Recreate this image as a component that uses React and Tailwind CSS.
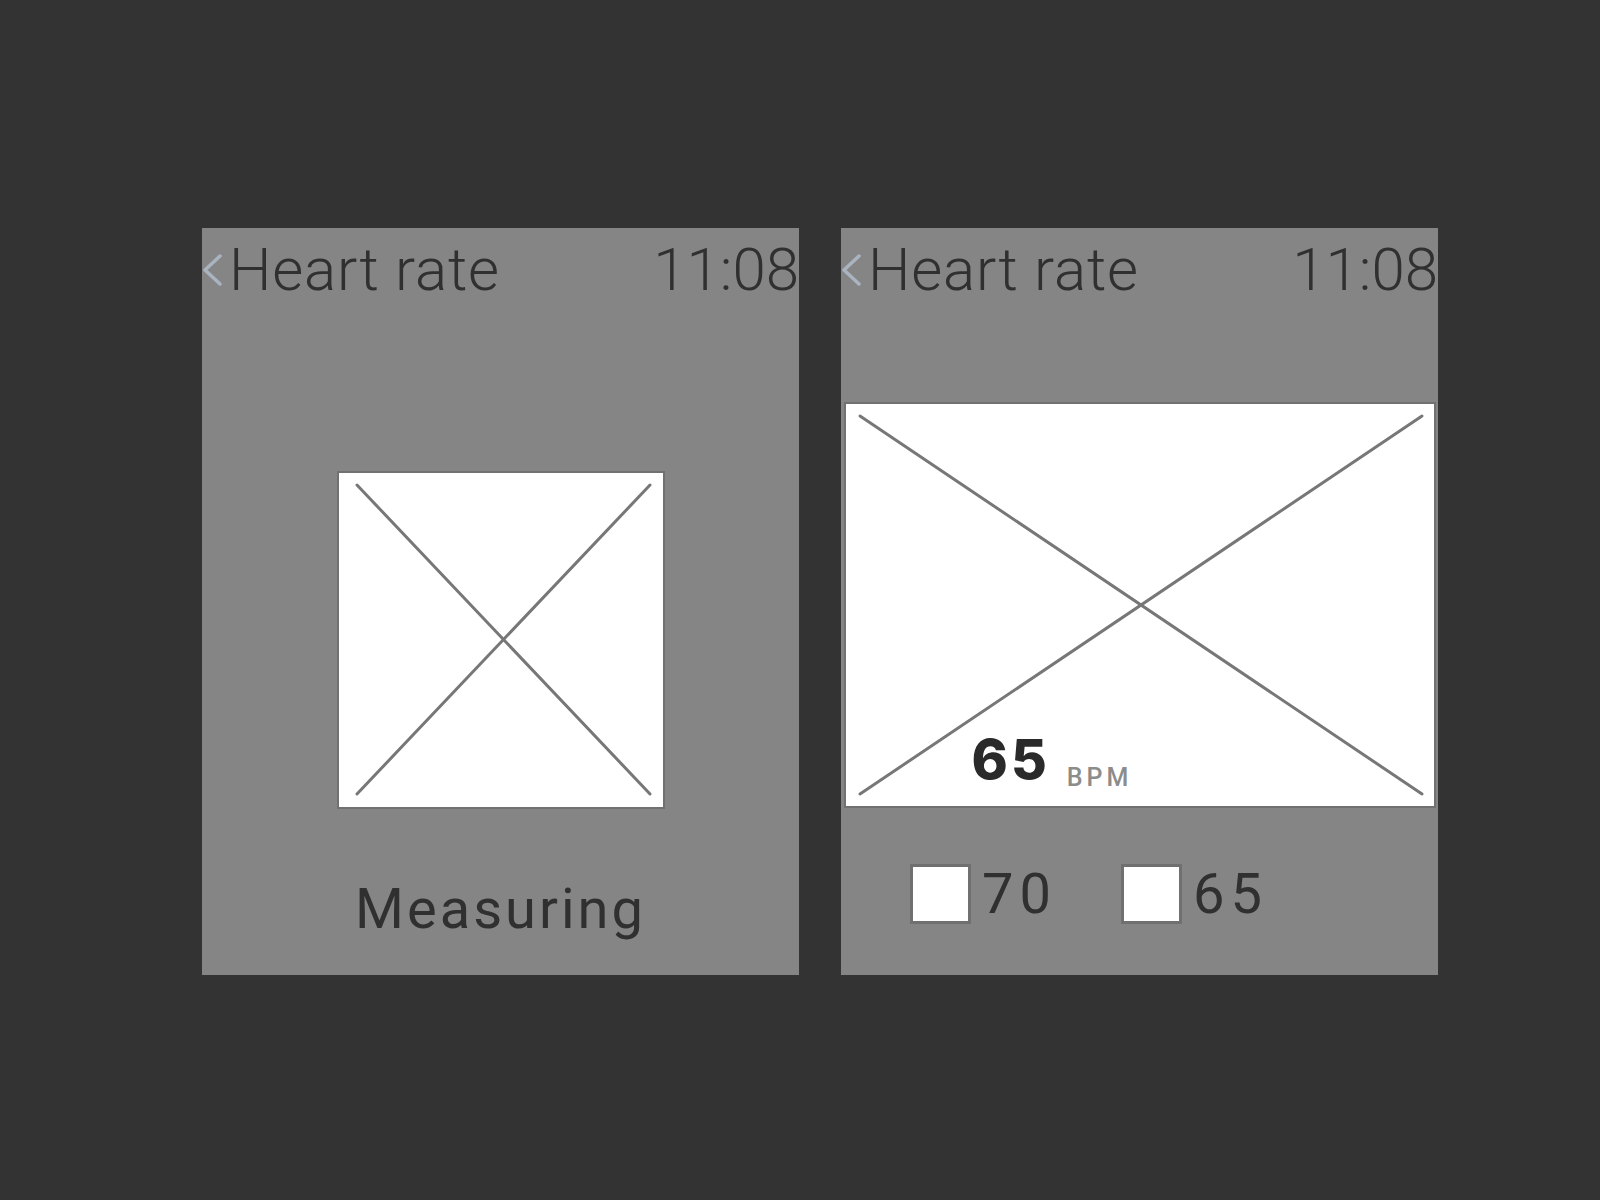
const sans = { fontFamily: "Roboto, 'Noto Sans', sans-serif" };

function Chevron() {
  return (
    <svg width="24" height="36" viewBox="0 0 24 36" className="shrink-0">
      <polyline
        points="18,4 3,18 18,32"
        fill="none"
        stroke="#aab3c0"
        strokeWidth="3.5"
        strokeLinecap="round"
        strokeLinejoin="round"
      />
    </svg>
  );
}

function Header() {
  return (
    <div className="mt-[12px] flex h-[60px] items-center justify-between">
      <div className="flex items-center">
        <Chevron />
        <span className="ml-[3px] text-[60px] font-light leading-none tracking-[0.8px] text-[#303030]">Heart rate</span>
      </div>
      <span className="text-[60px] font-light leading-none text-[#303030]">11:08</span>
    </div>
  );
}

function Placeholder({ w, h, inset, children }) {
  const [l, t, r, b] = inset;
  return (
    <div
      className="relative border-2 border-[#717171] bg-white"
      style={{ width: w, height: h }}
    >
      <svg className="absolute inset-0 h-full w-full" viewBox={`0 0 ${w - 4} ${h - 4}`} preserveAspectRatio="none">
        <line x1={l} y1={t} x2={w - 4 - r} y2={h - 4 - b} stroke="#777777" strokeWidth="3" strokeLinecap="round" />
        <line x1={w - 4 - r} y1={t} x2={l} y2={h - 4 - b} stroke="#777777" strokeWidth="3" strokeLinecap="round" />
      </svg>
      {children}
    </div>
  );
}

function Check({ value }) {
  return (
    <div className="flex items-center">
      <div className="h-[60px] w-[61px] border-[3px] border-[#707070] bg-white" />
      <span className="ml-[11px] text-[56px] leading-none tracking-[6px] text-[#303030]">{value}</span>
    </div>
  );
}

export default function App() {
  return (
    <div className="h-[1200px] w-[1600px] bg-[#333333] pl-[202px] pt-[228px]" style={sans}>
      <div className="flex gap-[42px]">
        <section className="flex h-[747px] w-[597px] flex-col bg-[#858585]">
          <Header />
          <div className="mt-[171px] flex justify-center">
            <Placeholder w={328} h={338} inset={[18, 12, 13, 13]} />
          </div>
          <p className="mt-[72px] text-center text-[56px] leading-none tracking-[3px] text-[#303030]">Measuring</p>
        </section>

        <section className="flex h-[747px] w-[597px] flex-col bg-[#858585]">
          <Header />
          <div className="mt-[102px] flex justify-center">
            <Placeholder w={592} h={406} inset={[14, 12, 12, 12]}>
              <div className="absolute bottom-[19px] left-[126px] flex items-baseline">
                <span
                  className="text-[55px] font-extrabold leading-none tracking-[3px] text-[#2a2a2a]"
                  style={{ fontFamily: "Inter, Roboto, sans-serif" }}
                >
                  65
                </span>
                <span className="ml-[17px] translate-y-[7px] text-[25px] font-medium leading-none tracking-[4px] text-[#8c8c8c]">
                  BPM
                </span>
              </div>
            </Placeholder>
          </div>
          <div className="ml-[69px] mt-[56px] flex gap-[64px]">
            <Check value="70" />
            <Check value="65" />
          </div>
        </section>
      </div>
    </div>
  );
}
